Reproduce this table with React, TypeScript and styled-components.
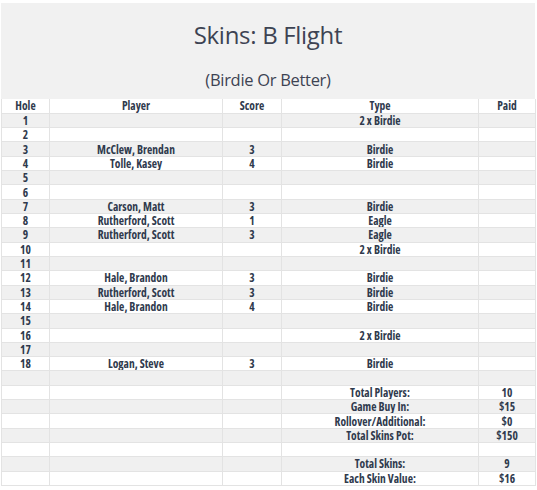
import React from 'react';
import styled, { createGlobalStyle } from 'styled-components';

const Global = createGlobalStyle`
	body {
		margin: 0;
		background: #fff;
	}
`;

const Page = styled.div({
	padding: '3px 2px 0 1px',
});

const Banner = styled.header({
	background: '#f1f1f1',
	height: 96,
	display: 'flex',
	flexDirection: 'column',
	alignItems: 'center',
	fontFamily: '"Open Sans", "Noto Sans", sans-serif',
	color: '#3d4353',
});

const Title = styled.h1({
	margin: 0,
	marginTop: 16,
	fontSize: 24,
	fontWeight: 400,
	lineHeight: '32px',
	letterSpacing: -0.3,
});

const Subtitle = styled.h2({
	margin: 0,
	marginTop: 17,
	fontSize: 16.5,
	fontWeight: 400,
	lineHeight: '24px',
	letterSpacing: -0.3,
});

const Table = styled.table({
	width: '100%',
	borderCollapse: 'collapse',
	tableLayout: 'fixed',
	fontFamily: '"Open Sans", "DejaVu Sans Condensed", sans-serif',
	fontStretch: '75%',
	fontWeight: 700,
	fontSize: 11.5,
	color: '#2f3a4d',
});

const Row = styled.tr<{ $shade: boolean }>(({ $shade }) => ({
	height: 14.32,
	background: $shade ? '#f0f0f0' : '#fff',
	borderBottom: '1px solid #e3e3e3',
}));

const Cell = styled.td({
	padding: 0,
	height: 13.32,
	lineHeight: '13px',
	textAlign: 'center',
	borderLeft: '1px solid #e3e3e3',
	borderRight: '1px solid #e3e3e3',
	whiteSpace: 'nowrap',
	overflow: 'hidden',
});

const HeadCell = styled(Cell).attrs({ as: 'th' })({
	fontWeight: 700,
});

type Line = [string, string, string, string, string];

const holes: Line[] = [
	['1', '', '', '2 x Birdie', ''],
	['2', '', '', '', ''],
	['3', 'McClew, Brendan', '3', 'Birdie', ''],
	['4', 'Tolle, Kasey', '4', 'Birdie', ''],
	['5', '', '', '', ''],
	['6', '', '', '', ''],
	['7', 'Carson, Matt', '3', 'Birdie', ''],
	['8', 'Rutherford, Scott', '1', 'Eagle', ''],
	['9', 'Rutherford, Scott', '3', 'Eagle', ''],
	['10', '', '', '2 x Birdie', ''],
	['11', '', '', '', ''],
	['12', 'Hale, Brandon', '3', 'Birdie', ''],
	['13', 'Rutherford, Scott', '3', 'Birdie', ''],
	['14', 'Hale, Brandon', '4', 'Birdie', ''],
	['15', '', '', '', ''],
	['16', '', '', '2 x Birdie', ''],
	['17', '', '', '', ''],
	['18', 'Logan, Steve', '3', 'Birdie', ''],
	['', '', '', '', ''],
	['', '', '', 'Total Players:', '10'],
	['', '', '', 'Game Buy In:', '$15'],
	['', '', '', 'Rollover/Additional:', '$0'],
	['', '', '', 'Total Skins Pot:', '$150'],
	['', '', '', '', ''],
	['', '', '', 'Total Skins:', '9'],
	['', '', '', 'Each Skin Value:', '$16'],
];

const widths = [48, 173, 59, 197, 57];
const heads = ['Hole', 'Player', 'Score', 'Type', 'Paid'];

export default function App() {
	return (
		<Page>
			<Global />
			<Banner>
				<Title>Skins: B Flight</Title>
				<Subtitle>(Birdie Or Better)</Subtitle>
			</Banner>
			<Table>
				<colgroup>
					{widths.map((w, i) => (
						<col key={i} style={{ width: w }} />
					))}
				</colgroup>
				<thead>
					<Row $shade={false}>
						{heads.map((h) => (
							<HeadCell key={h}>{h}</HeadCell>
						))}
					</Row>
				</thead>
				<tbody>
					{holes.map((line, i) => (
						<Row key={i} $shade={i % 2 === 0}>
							{line.map((text, j) => (
								<Cell key={j}>{text}</Cell>
							))}
						</Row>
					))}
				</tbody>
			</Table>
		</Page>
	);
}
